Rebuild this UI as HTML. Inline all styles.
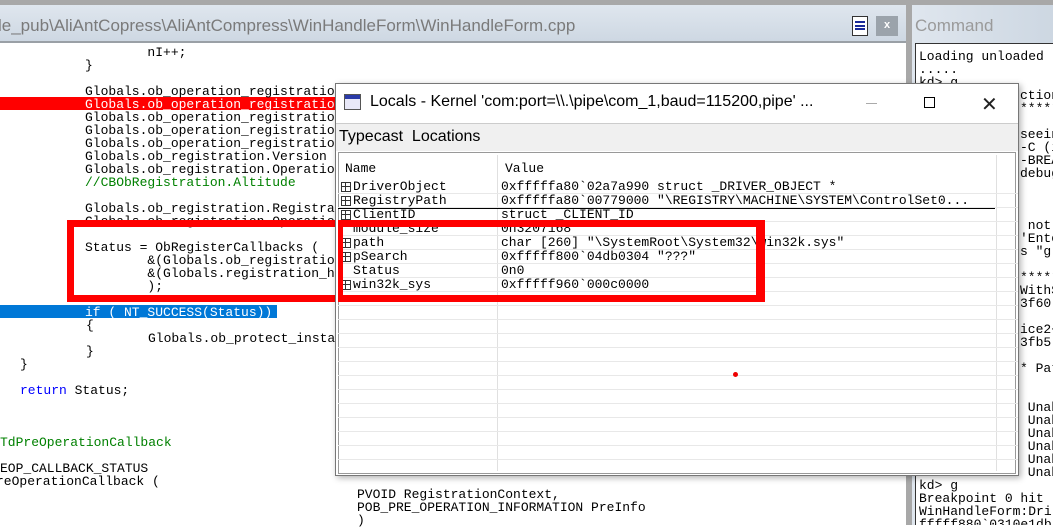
<!DOCTYPE html><html><head><meta charset="utf-8"><style>
*{margin:0;padding:0;box-sizing:border-box}
body{width:1053px;height:525px;overflow:hidden;background:#fff;position:relative;font-family:"Liberation Mono",monospace}
.a{position:absolute;white-space:pre}
.c{font-size:13px;line-height:13px;color:#000}
.m{font-size:13px;line-height:13px;color:#000}
.g{color:#008000}.b{color:#0000ff}
.row{position:absolute;left:338px;width:680px;height:14px;border-bottom:1px solid #e8e8e8;font-size:13px;line-height:14px}
.plus{position:absolute;left:3px;top:2px;width:10px;height:10px;border:1px solid #333}
.plus:before{content:"";position:absolute;left:3px;top:0;width:1px;height:8px;background:#333}
.plus:after{content:"";position:absolute;left:0;top:3px;width:8px;height:1px;background:#333}
</style></head><body>
<div class="a" style="left:0;top:0;width:1053px;height:5px;background:#a8a8a8"></div>
<div class="a" style="left:0;top:5px;width:906px;height:38px;background:linear-gradient(#dfe6ee,#cdd7e2)"></div>
<div class="a" style="left:0;top:41px;width:906px;height:2px;background:#9aa0a6"></div>
<div class="a" style="left:-2px;top:16px;font:17px 'Liberation Sans',sans-serif;color:#7a7a7a">le_pub\AliAntCopress\AliAntCompress\WinHandleForm\WinHandleForm.cpp</div>
<div class="a" style="left:852px;top:16px;width:16px;height:20px;background:#fff;border:1px solid #333"><div style="margin:4px 2px;height:9px;border-top:2px solid #1a2a9a;border-bottom:2px solid #1a2a9a;box-shadow:inset 0 2px 0 #fff,inset 0 4px 0 #1a2a9a"></div></div>
<div class="a" style="left:876px;top:16px;width:22px;height:20px;background:#9ba3ab;color:#fff;font:bold 11px 'Liberation Sans';text-align:center;line-height:19px">x</div>
<div class="a" style="left:906px;top:5px;width:6px;height:520px;background:#a8a8a8"></div>
<div class="a" style="left:912px;top:5px;width:141px;height:520px;background:linear-gradient(90deg,#dfe6ee,#cdd7e2)"></div>
<div class="a" style="left:915px;top:16px;font:17px 'Liberation Sans',sans-serif;color:#9a9a9a">Command</div>
<div class="a" style="left:915px;top:43px;width:138px;height:482px;background:#fff;border-left:1px solid #333;border-top:1px solid #333;overflow:hidden">
<div class="a m" style="left:3px;top:6px">Loading unloaded
.....
kd> g</div>
<div class="a m" style="left:3px;top:435px">kd> g
Breakpoint 0 hit
WinHandleForm:Dri
fffff880`0310e1db</div>
<div class="a m" style="left:104px;top:45px">ction
*****

seein
-C (i
-BREA
debug



 not
'Ente
s "g"

*****
WithS
3f60

ice2+
3fb5

* Pat


 Unab
 Unab
 Unab
 Unab
 Unab
 Unab</div>
</div>
<div class="a" style="left:0;top:97px;width:340px;height:13px;background:#ff0000"></div>
<div class="a" style="left:0;top:305px;width:277px;height:13px;background:#0078d7"></div>
<div class="a c" style="left:85px;top:46px">        nI++;
}

Globals.ob_operation_registratio
<span style="color:#fff">Globals.ob_operation_registratio</span>
Globals.ob_operation_registratio
Globals.ob_operation_registratio
Globals.ob_operation_registratio
Globals.ob_registration.Version
Globals.ob_registration.Operatio
<span class="g">//CBObRegistration.Altitude</span>

Globals.ob_registration.Registra
Globals.ob_registration.Operatio

Status = ObRegisterCallbacks (
        &amp;(Globals.ob_registratio
        &amp;(Globals.registration_h
        );</div>
<div class="a c" style="left:85px;top:306px;color:#fff">if ( NT_SUCCESS(Status))</div>
<div class="a c" style="left:86px;top:319px">{</div>
<div class="a c" style="left:148px;top:332px">Globals.ob_protect_insta</div>
<div class="a c" style="left:86px;top:345px">}</div>
<div class="a c" style="left:20px;top:358px">}</div>
<div class="a c" style="left:20px;top:384px"><span class="b">return</span> Status;</div>
<div class="a c" style="left:0;top:436px"><span class="g">TdPreOperationCallback</span>

EOP_CALLBACK_STATUS</div>
<div class="a c" style="left:-4px;top:475px">reOperationCallback (</div>
<div class="a c" style="left:357px;top:488px">PVOID RegistrationContext,
POB_PRE_OPERATION_INFORMATION PreInfo
)</div>
<div class="a" style="left:67px;top:220px;width:698px;height:82px;border:7px solid #ff0000"></div>
<!-- dialog -->
<div class="a" style="left:335px;top:83px;width:684px;height:393px;background:#fff;border:1px solid #777;box-shadow:2px 2px 6px rgba(0,0,0,.3)">
<div style="position:absolute;left:8px;top:10px;width:17px;height:16px;border:1px solid #555;background:linear-gradient(#2a3aa8 0 4px,#e8e8f8 4px)"></div>
<div style="position:absolute;left:34px;top:9px;font:16px 'Liberation Sans',sans-serif;white-space:pre">Locals - Kernel 'com:port=\\.\pipe\com_1,baud=115200,pipe' ...</div>
<div style="position:absolute;left:530px;top:19px;width:11px;height:1px;background:#aaa"></div>
<div style="position:absolute;left:588px;top:13px;width:11px;height:11px;border:1px solid #000"></div>
<div style="position:absolute;left:645px;top:8px;font:20px 'Liberation Sans';color:#222">✕</div>
<div style="position:absolute;left:0;top:39px;width:682px;height:28px;background:#f0f0f0;border-top:1px solid #ccc"></div>
<div style="position:absolute;left:3px;top:44px;font:16px 'Liberation Sans',sans-serif">Typecast &nbsp;Locations</div>
<div style="position:absolute;left:2px;top:68px;width:678px;height:322px;border:1px solid #999;background:#fff"></div>
</div>
<div class="a" style="left:497px;top:155px;width:1px;height:316px;background:#e0e0e0"></div>
<div class="a" style="left:996px;top:155px;width:1px;height:316px;background:#e0e0e0"></div>
<div class="a" style="left:345px;top:161px;font-size:13px">Name</div>
<div class="a" style="left:505px;top:161px;font-size:13px">Value</div>
<div class="row" style="top:180px"><span class="plus"></span><span class="a" style="left:15px">DriverObject</span><span class="a" style="left:163px">0xfffffa80`02a7a990 struct _DRIVER_OBJECT *</span></div>
<div class="row" style="top:194px"><span class="plus"></span><span class="a" style="left:15px">RegistryPath</span><span class="a" style="left:163px">0xfffffa80`00779000 "\REGISTRY\MACHINE\SYSTEM\ControlSet0...</span></div>
<div class="a" style="left:338px;top:208px;width:657px;height:1px;background:#000"></div>
<div class="row" style="top:208px"><span class="plus"></span><span class="a" style="left:15px">ClientID</span><span class="a" style="left:163px">struct _CLIENT_ID</span></div>
<div class="row" style="top:222px"><span class="a" style="left:15px">module_size</span><span class="a" style="left:163px">0n3207168</span></div>
<div class="row" style="top:236px"><span class="plus"></span><span class="a" style="left:15px">path</span><span class="a" style="left:163px">char [260] "\SystemRoot\System32\win32k.sys"</span></div>
<div class="row" style="top:250px"><span class="plus"></span><span class="a" style="left:15px">pSearch</span><span class="a" style="left:163px">0xfffff800`04db0304 "???"</span></div>
<div class="row" style="top:264px"><span class="a" style="left:15px">Status</span><span class="a" style="left:163px">0n0</span></div>
<div class="row" style="top:278px"><span class="plus"></span><span class="a" style="left:15px">win32k_sys</span><span class="a" style="left:163px">0xfffff960`000c0000</span></div>
<div class="row" style="top:292px"></div><div class="row" style="top:306px"></div><div class="row" style="top:320px"></div><div class="row" style="top:334px"></div><div class="row" style="top:348px"></div><div class="row" style="top:362px"></div><div class="row" style="top:376px"></div><div class="row" style="top:390px"></div><div class="row" style="top:404px"></div><div class="row" style="top:418px"></div><div class="row" style="top:432px"></div><div class="row" style="top:446px"></div>
<div class="a" style="left:338px;top:222px;width:5px;height:76px;background:#ff0000"></div>
<div class="a" style="left:338px;top:295px;width:427px;height:7px;background:#ff0000"></div>
<div class="a" style="left:338px;top:220px;width:427px;height:7px;background:#ff0000"></div>
<div class="a" style="left:756px;top:220px;width:9px;height:82px;background:#ff0000"></div>
<div class="a" style="left:733px;top:372px;width:5px;height:5px;border-radius:50%;background:#e00"></div>
</body></html>
